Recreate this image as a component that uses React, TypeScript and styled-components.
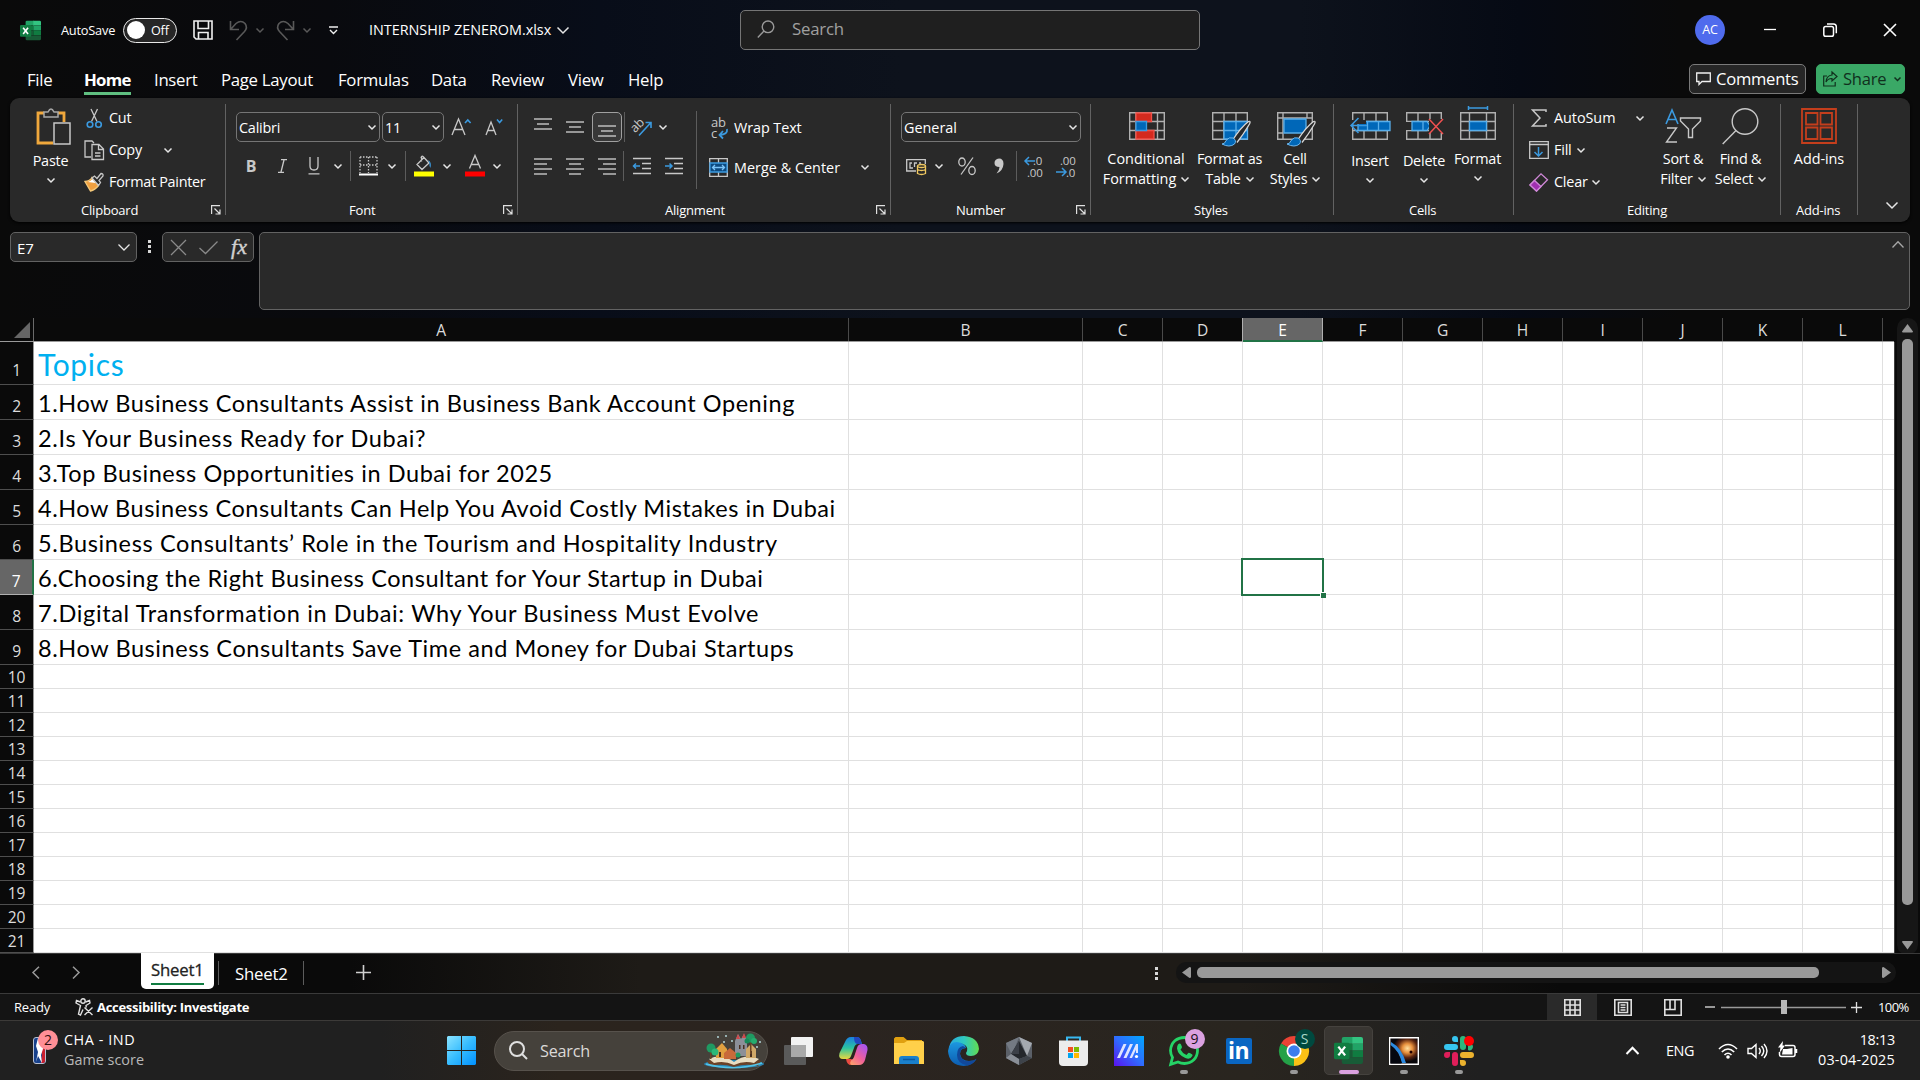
import React from 'react';
import styled, { createGlobalStyle, css } from 'styled-components';

const GlobalStyle = createGlobalStyle`
  *, *::before, *::after { box-sizing: border-box; }
  body { margin: 0; background: #0a0a0a; overflow: hidden; }
  svg { display: block; flex: none; overflow: visible; }
`;

const ui = '"Open Sans", "Noto Sans", sans-serif';
const grey = '#c8c8c8';
const blue = '#3b9ae0';

/* ---------- shared parts ---------- */

const Window = styled.div`
  width: 1920px;
  height: 1080px;
  display: flex;
  flex-direction: column;
  overflow: hidden;
  font-family: ${ui};
  font-size: 14.4px;
  letter-spacing: -0.014em;
  line-height: 20px;
  color: #fff;
  white-space: nowrap;
  background: linear-gradient(90deg, #0a0a0a 0, #090a0e 330px, #080d19 600px, #0d121c 900px, #0d121c 1300px, #060a14 1520px, #0a0a0a 1680px);
`;

const Text = styled.span<{ $size?: number; $color?: string; $w?: number; $track?: number; $bold?: boolean; $dy?: number }>`
  flex: none;
  font-size: ${p => p.$size ?? 14.4}px;
  color: ${p => p.$color ?? '#fff'};
  font-weight: ${p => (p.$bold ? 700 : 400)};
  ${p => p.$w && css`width: ${p.$w}px;`}
  ${p => p.$track !== undefined && css`letter-spacing: ${p.$track}px;`}
  ${p => p.$dy && css`margin-top: ${p.$dy}px;`}
`;

const Slot = styled.span<{ $w: number; $dy?: number }>`
  flex: none;
  width: ${p => p.$w}px;
  display: flex;
  justify-content: center;
  align-items: center;
  ${p => p.$dy && css`margin-top: ${p.$dy}px;`}
`;

const Gap = styled.span<{ $w: number }>`
  flex: none;
  width: ${p => p.$w}px;
`;

type SvgProps = { w: number; h: number; children: React.ReactNode; stroke?: string; sw?: number };
const Svg = ({ w, h, children, stroke = grey, sw = 1.3 }: SvgProps) => (
  <svg width={w} height={h} viewBox={`0 0 ${w} ${h}`} fill="none" stroke={stroke} strokeWidth={sw}>
    {children}
  </svg>
);

const Chevron = ({ w = 8, color = '#e6e6e6', sw = 1.5, up = false }: { w?: number; color?: string; sw?: number; up?: boolean }) => (
  <Svg w={w} h={w / 2 + 1} stroke={color} sw={sw}>
    <path d={up ? `M.5 ${w / 2 + 0.5}L${w / 2} .7L${w - 0.5} ${w / 2 + 0.5}` : `M.5 .5L${w / 2} ${w / 2}L${w - 0.5} .5`} />
  </Svg>
);

/* ---------- title bar ---------- */

const TitleBar = styled.header`
  height: 60px;
  display: flex;
  align-items: center;
  padding-left: 20px;
`;

const Toggle = styled.div`
  width: 54px;
  height: 25px;
  border: 1.5px solid #e8e8e8;
  border-radius: 13px;
  background: #262626;
  display: flex;
  align-items: center;
  padding-left: 3px;
  gap: 6px;
`;

const Knob = styled.i`
  width: 18px;
  height: 18px;
  border-radius: 50%;
  background: #fff;
`;

const SearchBox = styled.div`
  width: 460px;
  height: 40px;
  border: 1px solid #757575;
  border-radius: 5px;
  background: #1f1f1f;
  display: flex;
  align-items: center;
  padding: 0 0 2px 16px;
  gap: 17px;
`;

const Avatar = styled.div`
  width: 30px;
  height: 30px;
  border-radius: 50%;
  background: #4f6bed;
  display: flex;
  align-items: center;
  justify-content: center;
`;

const ExcelLogo = ({ size }: { size: number }) => (
  <svg width={size} height={size} viewBox="0 0 30 30">
    <path d="M10 1h10v7H8V3q0-2 2-2z" fill="#21a366" />
    <path d="M19 1h9q2 0 2 2v5H19z" fill="#33c481" />
    <path d="M8 8h11v7H8z" fill="#107c41" />
    <path d="M19 8h11v7H19z" fill="#21a366" />
    <path d="M8 15h11v7H8z" fill="#185c37" />
    <path d="M19 15h11v7H19z" fill="#107c41" />
    <path d="M8 22h22v5q0 2-2 2H10q-2 0-2-2z" fill="#185c37" />
    <rect x="0" y="7" width="16" height="17" rx="1.5" fill="#107c41" />
    <path d="M4.500 11l7 9M11.500 11l-7 9" stroke="#fff" strokeWidth="2.3" />
  </svg>
);

const Undo = ({ flip = false }: { flip?: boolean }) => (
  <svg width="19" height="21" viewBox="0 0 19 21" fill="none" stroke="#595959" strokeWidth="1.6" transform={flip ? 'scale(-1 1)' : undefined}>
    <path d="M1.500 1v8.500h8.500M2 9L7 3.500Q12 -.5 16 3.500Q19 7.500 15.500 11.500L7.500 20" />
  </svg>
);

const Title = () => (
  <TitleBar>
    <ExcelLogo size={21} />
    <Gap $w={20} />
    <Text $size={12.8} $w={62} $track={-0.22}>AutoSave</Text>
    <Toggle><Knob /><Text $size={12.6} $dy={1}>Off</Text></Toggle>
    <Gap $w={16} />
    <Svg w={20} h={20} stroke="#f0f0f0" sw={1.6}>
      <path d="M1 1h18v18H3l-2-2zM5 1v7.500h10.500V1M5.500 19v-6.500h9.500V19" />
    </Svg>
    <Gap $w={16} />
    <Undo />
    <Slot $w={24}><Chevron color="#595959" /></Slot>
    <Gap $w={4} />
    <Undo flip />
    <Slot $w={24}><Chevron color="#595959" /></Slot>
    <Gap $w={10} />
    <Svg w={9} h={9} stroke="#f0f0f0" sw={1.4}><path d="M0 1h9M1 4l3.500 3.500L8 4" /></Svg>
    <Gap $w={31} />
    <Text $w={188} $track={-0.03}>INTERNSHIP ZENEROM.xlsx</Text>
    <Chevron w={12} />
    <Gap $w={171} />
    <SearchBox>
      <Svg w={18} h={18} stroke="#9a9a9a" sw={1.4}><circle cx="11" cy="6.800" r="5.800" /><path d="M7 11L.8 17.500" /></Svg>
      <Text $size={16.8} $color="#a0a0a0">Search</Text>
    </SearchBox>
    <Gap $w={495} />
    <Avatar><Text $size={12.5}>AC</Text></Avatar>
    <Gap $w={39} />
    <Svg w={12} h={2} stroke="#fff"><path d="M0 .5h12" /></Svg>
    <Gap $w={47} />
    <Svg w={14} h={14} stroke="#fff" sw={1.5}>
      <rect x=".8" y="3.500" width="9.700" height="9.700" rx="1.800" />
      <path d="M4 1h6.500q2.800 0 2.800 2.800v6.500" />
    </Svg>
    <Gap $w={46} />
    <Svg w={14} h={14} stroke="#fff" sw={1.6}><path d="M1 1l12 12M13 1L1 13" /></Svg>
  </TitleBar>
);

/* ---------- ribbon tabs ---------- */

const TabStrip = styled.nav`
  height: 38px;
  display: flex;
  padding-left: 27px;
`;

const Tab = styled.div<{ $w: number; $active?: boolean }>`
  width: ${p => p.$w}px;
  padding-top: 9px;
  font-size: 16.8px;
  line-height: 22px;
  font-weight: ${p => (p.$active ? 700 : 400)};
  letter-spacing: ${p => (p.$active ? '-0.045em' : '-0.018em')};
  span {
    display: inline-block;
    height: 26px;
    ${p => p.$active && css`border-bottom: 3px solid #5fbf80;`}
  }
`;

const PillButton = styled.button<{ $w: number; $primary?: boolean }>`
  width: ${p => p.$w}px;
  height: 30px;
  margin-top: 4px;
  padding: 0 0 0 6px;
  border-radius: 5px;
  border: 1px solid ${p => (p.$primary ? '#3aa866' : '#7a7a7a')};
  background: ${p => (p.$primary ? '#3aa866' : '#262626')};
  font: inherit;
  letter-spacing: -0.018em;
  display: flex;
  align-items: center;
  gap: 5px;
`;

const tabs: [string, number][] = [
  ['File', 57], ['Home', 70], ['Insert', 67], ['Page Layout', 117], ['Formulas', 93],
  ['Data', 60], ['Review', 77], ['View', 60], ['Help', 1061],
];

const Tabs = () => (
  <TabStrip>
    {tabs.map(([name, w]) => (
      <Tab key={name} $w={w} $active={name === 'Home'}><span>{name}</span></Tab>
    ))}
    <PillButton $w={117}>
      <Svg w={15} h={14} stroke="#f0f0f0"><path d="M.7 1h13.600v8.500H6L3 12.500V9.500H.7z" /></Svg>
      <Text $size={16.6}>Comments</Text>
    </PillButton>
    <Gap $w={10} />
    <PillButton $w={89} $primary>
      <Svg w={15} h={16} stroke="#10301d" sw={1.2}>
        <path d="M4 5H.7v10h11.500V11M9 1l5 4.500L9 10V7.500Q5 7.300 3 11Q3.500 4.500 9 4z" />
      </Svg>
      <Text $size={16.6} $color="#10301d">Share</Text>
      <Slot $w={13}><Chevron w={7} color="#10301d" /></Slot>
    </PillButton>
  </TabStrip>
);

/* ---------- ribbon ---------- */

const RibbonBar = styled.section`
  margin: 0 10px;
  height: 124px;
  flex: none;
  border-radius: 9px;
  background: #292929;
  display: flex;
  box-shadow: 0 1px 3px #000;
`;

const Group = styled.div<{ $w: number }>`
  width: ${p => p.$w}px;
  flex: none;
  display: flex;
  flex-direction: column;
`;

const GroupBody = styled.div`
  height: 101px;
  display: flex;
`;

const GroupFoot = styled.div<{ $pad: number }>`
  height: 21px;
  padding-left: ${p => p.$pad}px;
  padding-right: 4px;
  display: flex;
  justify-content: space-between;
  align-items: center;
  font-size: 13px;
`;

const GroupRule = styled.i`
  flex: none;
  width: 1px;
  height: 111px;
  margin-top: 6px;
  background: #626262;
`;

const Rule = styled.i<{ $h?: number; $mx?: string }>`
  flex: none;
  width: 1px;
  height: ${p => p.$h ?? 30}px;
  margin: ${p => p.$mx ?? '0'};
  background: #5c5c5c;
`;

const Stack = styled.div<{ $w?: number; $top?: number; $gap?: number; $left?: number }>`
  ${p => p.$w && css`width: ${p.$w}px;`}
  flex: none;
  padding-top: ${p => p.$top ?? 0}px;
  padding-left: ${p => p.$left ?? 0}px;
  display: flex;
  flex-direction: column;
  gap: ${p => p.$gap ?? 0}px;
`;

const Row = styled.div<{ $h: number }>`
  height: ${p => p.$h}px;
  display: flex;
  align-items: center;
`;

const Combo = styled.div<{ $w: number }>`
  width: ${p => p.$w}px;
  height: 30px;
  flex: none;
  border: 1px solid #757575;
  border-radius: 5px;
  padding: 1px 3px 0 2px;
  display: flex;
  align-items: center;
  justify-content: space-between;
`;

const PressedButton = styled.span`
  width: 30px;
  height: 30px;
  flex: none;
  border: 1px solid #a0a0a0;
  border-radius: 5px;
  background: #383838;
  display: flex;
  align-items: center;
  justify-content: center;
`;

const BigButton = styled.div<{ $w: number; $left?: number }>`
  width: ${p => p.$w}px;
  flex: none;
  display: flex;
  flex-direction: column;
  align-items: center;
  padding: 8px 0 0 ${p => p.$left ?? 0}px;
`;

const IconArea = styled.span<{ $left?: number }>`
  height: 43px;
  padding: 0 0 3px ${p => p.$left ?? 0}px;
  display: flex;
  align-items: center;
`;

const LabelLine = styled.span<{ $h?: number }>`
  height: ${p => p.$h ?? 20}px;
  display: flex;
  align-items: center;
  gap: 5px;
`;

const Launcher = () => (
  <Svg w={10} h={10} stroke="#e0e0e0" sw={1.2}><path d="M.6 9V.6H9M3.500 3.500l5 5M9 4.500V9H4.500" /></Svg>
);

const Lines = ({ rows }: { rows: [number, number][] }) => (
  <Svg w={18} h={2 + 5 * (rows.length - 1)} sw={1.4}>
    {rows.map(([a, b], i) => <path key={i} d={`M${a} ${1 + i * 5}H${b}`} />)}
  </Svg>
);

const Brush = () => (
  <>
    <path d="M11 21Q20 7 27.500 1.500Q30 .5 28.500 4Q22 15 16 22.500" fill="#292929" stroke="#d8d8d8" strokeWidth="1.3" />
    <path d="M1 24Q4 24 5 20.500Q8 16.500 12 18Q16 20.500 13.500 24Q8.500 28 1 24z" fill="#0067b8" stroke="#6cb8f0" strokeWidth="1" />
  </>
);

const Clipboard = () => (
  <Group $w={215}>
    <GroupBody>
      <BigButton $w={68} $left={13}>
        <IconArea $left={6}>
          <Svg w={36} h={38} sw={1.5}>
            <path d="M8 6H2v30h15M22 6h6v9" stroke="#f0a83c" strokeWidth="2.800" />
            <path d="M8 10V5h4q3-6 6 0h4v5z" fill="#292929" stroke="#a8a8a8" />
            <path d="M18 16h16v21H18z" fill="#292929" />
          </Svg>
        </IconArea>
        <LabelLine $h={24}><Text>Paste</Text></LabelLine>
        <LabelLine $h={14}><Chevron /></LabelLine>
      </BigButton>
      <Stack $top={4} $left={6}>
        <Row $h={32}>
          <Gap $w={2} />
          <Svg w={17} h={21}>
            <path d="M5 1l6 12.500M11.500 1l-6 12.500" />
            <circle cx="4" cy="16.500" r="2.800" stroke={blue} strokeWidth="1.600" />
            <circle cx="12.500" cy="16.500" r="2.800" stroke={blue} strokeWidth="1.600" />
          </Svg>
          <Gap $w={6} />
          <Text>Cut</Text>
        </Row>
        <Row $h={32}>
          <Svg w={20} h={20}>
            <path d="M7 17H1V1h7l2 2M8 4.500h7l4.500 4.500v10.500H8zM14.500 4.500v5h5M11 13h5.500M11 16h5.500" />
          </Svg>
          <Gap $w={5} />
          <Text $w={52}>Copy</Text>
          <Slot $w={14}><Chevron /></Slot>
        </Row>
        <Row $h={32}>
          <Svg w={20} h={20}>
            <path d="M1 9.500Q6 9 8 5.500l6.500 8Q11 18 6.500 19z" fill="#f0a040" stroke="#f5c878" />
            <path d="M4 10Q7 9 8.500 7l3 4z" fill="#fff" stroke="none" />
            <path d="M8 6l2.500-2 2.500 2.500L17 1.500q2.500 0 2 2.500l-4 4.500 1.500 2-2 3z" fill="#292929" />
          </Svg>
          <Gap $w={5} />
          <Text $track={-0.28}>Format Painter</Text>
        </Row>
      </Stack>
    </GroupBody>
    <GroupFoot $pad={71}>Clipboard<Launcher /></GroupFoot>
  </Group>
);

const FontGroup = () => (
  <Group $w={291}>
    <GroupBody>
      <Stack $top={14} $left={10} $gap={8}>
        <Row $h={30}>
          <Combo $w={144}><Text>Calibri</Text><Chevron /></Combo>
          <Gap $w={2} />
          <Combo $w={62}><Text>11</Text><Chevron /></Combo>
          <Gap $w={7} />
          <Svg w={20} h={18}>
            <path d="M1 17L7.500 1L14 17M3.500 11.500h8" />
            <path d="M14 5l2.800-3L19.600 5" stroke={blue} strokeWidth="1.600" />
          </Svg>
          <Gap $w={14} />
          <Svg w={18} h={18}>
            <path d="M1 17L6 4L11 17M3 12.500h6" />
            <path d="M12 1.500l2.600 3L17.200 1.500" stroke={blue} strokeWidth="1.600" />
          </Svg>
        </Row>
        <Row $h={32}>
          <Slot $w={30}><Text $size={16} $bold $color={grey}>B</Text></Slot>
          <Slot $w={32}>
            <Svg w={9} h={14}><path d="M3 .7h6M0 13.300h6M6 1L3 13" /></Svg>
          </Slot>
          <Slot $w={31}>
            <Svg w={12} h={18}><path d="M2 0v9q0 4 4 4t4-4V0M.5 16.800h11" /></Svg>
          </Slot>
          <Slot $w={18}><Chevron /></Slot>
          <Rule $mx="0 2px 0 3px" />
          <Slot $w={30}>
            <Svg w={19} h={20}>
              <path d="M1 1h17M1 9h17M1 1v16M9.500 1v16M18 1v16" strokeDasharray="1.500 1.500" />
              <path d="M0 18.500h19" strokeWidth="2" stroke="#fff" />
            </Svg>
          </Slot>
          <Slot $w={18}><Chevron /></Slot>
          <Rule $mx="0 1px 0 4px" />
          <Slot $w={33}>
            <Svg w={20} h={20}>
              <path d="M7.500 .5v5M10 1.500L3 8.500l5 5 7-6.500-5.500-6q-2-2-2.500 1" />
              <path d="M14 4q4 2 2.500 8-1.500-2-1-5z" fill={blue} stroke="none" />
              <path d="M0 15.500h20v5H0z" fill="#ff0" stroke="none" />
            </Svg>
          </Slot>
          <Slot $w={14}><Chevron /></Slot>
          <Slot $w={41}>
            <Svg w={20} h={20}>
              <path d="M4.500 12.500L10 -.5L15.500 12.500M6.500 8.500h7" />
              <path d="M0 15.500h20v5H0z" fill="#f00" stroke="none" />
            </Svg>
          </Slot>
          <Slot $w={4}><Chevron /></Slot>
        </Row>
      </Stack>
    </GroupBody>
    <GroupFoot $pad={123}>Font<Launcher /></GroupFoot>
  </Group>
);

const Indent = ({ right = false }: { right?: boolean }) => (
  <Svg w={18} h={18} sw={1.4}>
    <path d="M0 1.500h18M9 6.500h9M9 11.500h9M0 16.500h18" />
    <path d={right ? 'M0 9h7M4.500 6.500L7 9l-2.500 2.500' : 'M7 9H.5M3 6.500L.5 9 3 11.500'} stroke={blue} strokeWidth="1.500" />
  </Svg>
);

const Alignment = () => (
  <Group $w={372}>
    <GroupBody>
      <Stack $top={14} $left={9} $gap={8}>
        <Row $h={30}>
          <Slot $w={32} $dy={-7}><Lines rows={[[0, 18], [3, 15], [0, 18]]} /></Slot>
          <Slot $w={32}><Lines rows={[[0, 18], [3, 15], [0, 18]]} /></Slot>
          <Gap $w={1} />
          <PressedButton><Slot $w={20} $dy={8}><Lines rows={[[0, 18], [3, 15], [0, 18]]} /></Slot></PressedButton>
          <Rule $mx="0 6px 0 2px" />
          <Svg w={21} h={20}>
            <text x="0" y="13" fontSize="12.500" fill={grey} stroke="none" transform="rotate(-45 6 10)">ab</text>
            <path d="M8 18.500L19.500 6M14.500 5.500h5.500v5.500" stroke={blue} strokeWidth="1.600" />
          </Svg>
          <Slot $w={22}><Chevron /></Slot>
        </Row>
        <Row $h={32}>
          <Slot $w={32}><Lines rows={[[0, 18], [0, 13], [0, 18], [0, 13]]} /></Slot>
          <Slot $w={32}><Lines rows={[[0, 18], [3, 15], [0, 18], [3, 15]]} /></Slot>
          <Slot $w={32}><Lines rows={[[0, 18], [5, 18], [0, 18], [5, 18]]} /></Slot>
          <Rule />
          <Gap $w={1} />
          <Slot $w={34}><Indent /></Slot>
          <Slot $w={30}><Indent right /></Slot>
        </Row>
      </Stack>
      <Gap $w={7} />
      <Rule $h={78} $mx="13px 12px 0 0" />
      <Stack $top={14} $gap={7}>
        <Row $h={32}>
          <Svg w={20} h={22}>
            <text x="2" y="9.500" fontSize="13" fill={grey} stroke="none">ab</text>
            <text x="2" y="21" fontSize="13" fill={grey} stroke="none">c</text>
            <path d="M18 12q1 5.500-7.500 6M14 14l-3.500 4 3.500 3.500" stroke={blue} strokeWidth="1.800" />
          </Svg>
          <Gap $w={5} />
          <Text $track={-0.08}>Wrap Text</Text>
        </Row>
        <Row $h={32}>
          <Svg w={19} h={19}>
            <path d="M.7.7h17.600v17.600H.7zM9.500 0v19" />
            <path d="M1 5h17v9H1z" fill="#0c4a80" stroke={blue} />
            <path d="M4 9.500h11M6 7L3.500 9.500 6 12M13 7l2.500 2.500L13 12" stroke="#7cc4f8" />
          </Svg>
          <Gap $w={6} />
          <Text $w={124} $track={0.02} $dy={1}>Merge &amp; Center</Text>
          <Slot $w={14}><Chevron /></Slot>
        </Row>
      </Stack>
    </GroupBody>
    <GroupFoot $pad={147}>Alignment<Launcher /></GroupFoot>
  </Group>
);

const DecimalIcon = ({ less = false }: { less?: boolean }) => (
  <Svg w={20} h={22}>
    <text x={less ? 3 : 9} y="9.500" fontSize="11.500" fill={grey} stroke="none">{less ? '.00' : '.0'}</text>
    <text x={less ? 9 : 3} y="21.500" fontSize="11.500" fill={grey} stroke="none">{less ? '.0' : '.00'}</text>
    <path d={less ? 'M-1 17h10M5 13l4 4-4 4' : 'M11 6H1M5 2L1 6l4 4'} stroke={blue} strokeWidth="1.500" />
  </Svg>
);

const NumberGroup = () => (
  <Group $w={199}>
    <GroupBody>
      <Stack $top={14} $left={10} $gap={8}>
        <Row $h={30}><Combo $w={180}><Text $track={0}>General</Text><Chevron /></Combo></Row>
        <Row $h={32}>
          <Gap $w={5} />
          <Svg w={21} h={18}>
            <path d="M10 14H.7V2.700h18.600V7M6 6H4v5h3M11 6H8.500v4M15 6h-2" />
            <path d="M11 8.500h9v9h-9z" fill="#292929" stroke="none" />
            <path d="M11.500 9v7.500q4 2 8 0V9M11.500 12.500q4 2 8 0" stroke="#f0c860" />
            <ellipse cx="15.500" cy="9" rx="4" ry="1.500" stroke="#f0c860" />
          </Svg>
          <Slot $w={24}><Chevron /></Slot>
          <Slot $w={32}>
            <Svg w={18} h={18}><path d="M15 .5L3 17.500" /><ellipse cx="4" cy="5" rx="3.200" ry="4" /><ellipse cx="14" cy="13.500" rx="3.200" ry="4" /></Svg>
          </Slot>
          <Slot $w={32}>
            <Svg w={10} h={16}><path d="M5 .5q4.500 0 4.500 5.500Q9 13 2.500 15.500q3-3 3-6.500Q.5 9 .5 5T5 .5z" fill={grey} stroke="none" /></Svg>
          </Slot>
          <Rule $mx="0 7px 0 1px" />
          <DecimalIcon />
          <Gap $w={13} />
          <DecimalIcon less />
        </Row>
      </Stack>
    </GroupBody>
    <GroupFoot $pad={65}>Number<Launcher /></GroupFoot>
  </Group>
);

const Grid = ({ w = 36, h = 28 }: { w?: number; h?: number }) => (
  <path d={`M.7.7h${w - 1.4}v${h - 1.4}H.7zM0 9.500h${w}M0 18.500h${w}M12 0v${h}M24 0v${h}`} stroke="#b0b0b0" strokeWidth="1.400" />
);

const Styles = () => (
  <Group $w={242}>
    <GroupBody>
      <Gap $w={6} />
      <BigButton $w={98}>
        <IconArea $left={2}>
          <Svg w={36} h={28}>
            <path d="M.7.7h34.600v26.600H.7zM0 9.500h36M0 18.500h36M7 0v28M28.500 0v28" stroke="#b0b0b0" strokeWidth="1.400" />
            <path d="M7 1h15.500v8.500H7zM7 18.500h18V27H7z" fill="#d42a1e" stroke="#f05048" />
            <path d="M7 9.500h10.500v9H7z" fill="#0067b8" stroke="#3b9ae0" />
          </Svg>
        </IconArea>
        <LabelLine><Text $track={0.05}>Conditional</Text></LabelLine>
        <LabelLine><Text $track={-0.05}>Formatting</Text><Chevron /></LabelLine>
      </BigButton>
      <BigButton $w={69}>
        <IconArea $left={3}>
          <Svg w={38} h={28}>
            <Grid />
            <path d="M12 9.500h23.500V27H12z" fill="#0067b8" stroke="#58aeea" />
            <path d="M12 18.500h24M24 9.500V27" stroke="#58aeea" />
            <g transform="translate(9 8)"><Brush /></g>
          </Svg>
        </IconArea>
        <LabelLine><Text>Format as</Text></LabelLine>
        <LabelLine><Text>Table</Text><Chevron /></LabelLine>
      </BigButton>
      <BigButton $w={62}>
        <IconArea $left={2}>
          <Svg w={38} h={28}>
            <path d="M.7.7h34.600v26.600H.7zM0 6h36M6 0v28M30 0v6M0 21h6" stroke="#b0b0b0" strokeWidth="1.400" />
            <path d="M7 7h22v14H7z" fill="#0067b8" stroke="#58aeea" />
            <g transform="translate(9 8)"><Brush /></g>
          </Svg>
        </IconArea>
        <LabelLine><Text>Cell</Text></LabelLine>
        <LabelLine><Text>Styles</Text><Chevron /></LabelLine>
      </BigButton>
    </GroupBody>
    <GroupFoot $pad={103}>Styles</GroupFoot>
  </Group>
);

const Cells = () => (
  <Group $w={179}>
    <GroupBody>
      <Gap $w={9} />
      <BigButton $w={54}>
        <IconArea>
          <Svg w={40} h={28}>
            <g transform="translate(2 0)"><Grid /></g>
            <path d="M8 9.500h32v9H8z" fill="#0067b8" stroke="#58aeea" />
            <path d="M17.500 9.500v9M28.500 9.500v9" stroke="#58aeea" />
            <path d="M0 8h16v4H0z" fill="#292929" stroke="none" />
            <path d="M17 13.500H1M8.500 6L1 13.500 8.500 21" stroke={blue} strokeWidth="1.500" />
          </Svg>
        </IconArea>
        <LabelLine $h={24}><Text>Insert</Text></LabelLine>
        <LabelLine $h={14}><Chevron /></LabelLine>
      </BigButton>
      <BigButton $w={54}>
        <IconArea>
          <Svg w={37} h={28}>
            <Grid />
            <path d="M0 10h6v8H0z" fill="#292929" stroke="none" />
            <path d="M6 9.500h15l3 4.500-3 4.500H6zM17 9.500v9" fill="#0067b8" stroke="#58aeea" />
            <path d="M23 7h14v14H23z" fill="#292929" stroke="none" />
            <path d="M23 7l14 15M37 7L23 22" stroke="#f05050" strokeWidth="1.500" />
          </Svg>
        </IconArea>
        <LabelLine $h={24}><Text>Delete</Text></LabelLine>
        <LabelLine $h={14}><Chevron /></LabelLine>
      </BigButton>
      <BigButton $w={53}>
        <IconArea>
          <Svg w={36} h={28}>
            <path d="M.7.7h34.600v26.600H.7zM0 9.500h36M0 18.500h36M9.500 0v28M26.500 0v28" stroke="#b0b0b0" strokeWidth="1.400" />
            <path d="M9.500 9.500h17v9h-17z" fill="#0067b8" stroke="#58aeea" />
            <path d="M8.500 -4h19M8.500 -6v4M27.500 -6v4" stroke={blue} strokeWidth="1.500" />
          </Svg>
        </IconArea>
        <LabelLine $h={20}><Text>Format</Text></LabelLine>
        <LabelLine $h={18}><Chevron /></LabelLine>
      </BigButton>
    </GroupBody>
    <GroupFoot $pad={75}>Cells</GroupFoot>
  </Group>
);

const Editing = () => (
  <Group $w={266}>
    <GroupBody>
      <Stack $top={4} $left={15} $w={139}>
        <Row $h={32}>
          <Slot $w={20}><Svg w={16} h={18} sw={1.5}><path d="M15 3V1H1.500L9 9l-7.500 8H15v-2" /></Svg></Slot>
          <Gap $w={5} />
          <Text $w={79} $track={-0.05}>AutoSum</Text>
          <Slot $w={14}><Chevron /></Slot>
        </Row>
        <Row $h={32}>
          <Svg w={20} h={18}>
            <path d="M.7.7h18.600v16.600H.7zM0 3.500h20" />
            <path d="M9.500 6v9M5.500 11l4 4 4-4" stroke={blue} strokeWidth="1.500" />
          </Svg>
          <Gap $w={5} />
          <Text $w={20}>Fill</Text>
          <Slot $w={14}><Chevron /></Slot>
        </Row>
        <Row $h={32}>
          <Svg w={19} h={19}>
            <path d="M1 12L12 .8l6.500 6L7.500 18z" stroke="#d088d8" />
            <path d="M1 12l4.500-4.500 6.500 6L7.500 18z" fill="#a030b0" stroke="#d088d8" />
          </Svg>
          <Gap $w={6} />
          <Text $w={35}>Clear</Text>
          <Slot $w={14}><Chevron /></Slot>
        </Row>
      </Stack>
      <BigButton $w={60}>
        <IconArea>
          <Svg w={36} h={36} sw={1.4}>
            <path d="M1 16L7 2l6 14M3 11.500h8" stroke={blue} strokeWidth="1.600" />
            <path d="M2 20h9.500L1.500 34H12" />
            <path d="M15.500 10h20v3l-8 8v8.500h-4V21l-8-8z" />
          </Svg>
        </IconArea>
        <LabelLine><Text>Sort &amp;</Text></LabelLine>
        <LabelLine><Text>Filter</Text><Chevron /></LabelLine>
      </BigButton>
      <BigButton $w={55}>
        <IconArea>
          <Svg w={37} h={37} sw={1.4}><circle cx="23" cy="13.500" r="12.800" /><path d="M14 22.500L.7 36" /></Svg>
        </IconArea>
        <LabelLine><Text>Find &amp;</Text></LabelLine>
        <LabelLine><Text>Select</Text><Chevron /></LabelLine>
      </BigButton>
    </GroupBody>
    <GroupFoot $pad={113}>Editing</GroupFoot>
  </Group>
);

const AddIns = () => (
  <Group $w={76}>
    <GroupBody>
      <BigButton $w={76}>
        <IconArea>
          <Svg w={36} h={36} stroke="#c43e1c" sw={1.8}>
            <path d="M1 1h34v34H1zM5 5h11.500v11.500H5zM19.500 5H31v11.500H19.500zM5 19.500h11.500V31H5zM19.500 19.500H31V31H19.500z" />
          </Svg>
        </IconArea>
        <LabelLine><Text $track={-0.05}>Add-ins</Text></LabelLine>
      </BigButton>
    </GroupBody>
    <GroupFoot $pad={15}>Add-ins</GroupFoot>
  </Group>
);

const CollapseArea = styled.div`
  flex: 1;
  display: flex;
  align-items: flex-end;
  justify-content: flex-end;
  padding: 0 12px 13px 0;
`;

const Ribbon = () => (
  <RibbonBar>
    <Clipboard /><GroupRule />
    <FontGroup /><GroupRule />
    <Alignment /><GroupRule />
    <NumberGroup /><GroupRule />
    <Styles /><GroupRule />
    <Cells /><GroupRule />
    <Editing /><GroupRule />
    <AddIns /><GroupRule />
    <CollapseArea><Chevron w={12} /></CollapseArea>
  </RibbonBar>
);

/* ---------- formula bar ---------- */

const FormulaBar = styled.section`
  height: 96px;
  flex: none;
  padding: 10px 10px 0;
  display: flex;
  align-items: flex-start;
`;

const Field = styled.div<{ $w: number; $h?: number }>`
  width: ${p => p.$w}px;
  height: ${p => p.$h ?? 30}px;
  flex: none;
  border: 1px solid #626262;
  border-radius: 5px;
  background: #292929;
  display: flex;
  align-items: center;
  justify-content: space-between;
  padding: 1px 6px 0;
`;

const FormulaActions = styled(Field)`
  padding: 0 6px 0 8px;
`;

const FormulaInput = styled(Field)`
  align-items: flex-start;
  justify-content: flex-end;
  padding: 8px 5px;
`;

const FxLabel = styled.span`
  font: italic 400 22px/24px "Liberation Serif", serif;
  letter-spacing: 0;
  -webkit-text-stroke: 0.4px #d0d0d0;
  color: #d0d0d0;
`;

const Dots = () => (
  <Svg w={3} h={14} stroke="none">
    {[0, 5, 10].map(y => <rect key={y} x="0" y={y} width="3" height="3" fill="#d8d8d8" />)}
  </Svg>
);

const Formula = () => (
  <FormulaBar>
    <Field $w={127}><Text $size={15} $track={0}>E7</Text><Chevron w={12} sw={1.3} /></Field>
    <Row $h={30}><Slot $w={25}><Dots /></Slot></Row>
    <FormulaActions $w={92}>
      <Svg w={15} h={15} stroke="#8a8a8a"><path d="M0 0l15 15M15 0L0 15" /></Svg>
      <Svg w={19} h={13} stroke="#8a8a8a"><path d="M.5 7l6 5.500L18.500.5" /></Svg>
      <FxLabel>fx</FxLabel>
    </FormulaActions>
    <Gap $w={5} />
    <FormulaInput $w={1651} $h={78}><Chevron w={12} up color="#a8a8a8" sw={1.3} /></FormulaInput>
  </FormulaBar>
);

/* ---------- worksheet ---------- */

const Sheet = styled.main`
  height: 635px;
  flex: none;
  display: flex;
`;

const Table = styled.div`
  width: 1895px;
  overflow: hidden;
`;

const HeaderRow = styled.div`
  height: 24px;
  width: 1894px;
  display: flex;
  background: #0a0a0a;
  border-bottom: 1px solid #9a9a9a;
`;

const Corner = styled.div`
  width: 34px;
  flex: none;
  border-right: 1px solid #6a6a6a;
  display: flex;
  justify-content: flex-end;
  align-items: flex-end;
  padding: 0 3px 3px 0;
`;

const ColumnHead = styled.div<{ $w: number; $active?: boolean }>`
  width: ${p => p.$w}px;
  flex: none;
  border-right: 1px solid ${p => (p.$active ? '#b0b0b0' : '#4a4a4a')};
  &:last-child { border-right: none; }
  display: flex;
  justify-content: center;
  line-height: 24px;
  font-size: 15.600px;
  color: #dcdcdc;
  ${p => p.$active && css`
    background: #666;
    color: #fff;
    height: 24px;
    border-bottom: 2px solid #217346;
    box-shadow: -1px 0 #b0b0b0;
  `}
`;

const SheetRow = styled.div<{ $h: number }>`
  height: ${p => p.$h}px;
  width: 1895px;
  display: flex;
  background: #fff;
  border-right: 1px solid #404040;
`;

const RowHead = styled.div<{ $active?: boolean; $dy: number }>`
  width: 34px;
  flex: none;
  background: ${p => (p.$active ? '#666' : '#0a0a0a')};
  border-right: ${p => (p.$active ? '2px solid #217346' : '1px solid #9a9a9a')};
  border-bottom: 1px solid ${p => (p.$active ? '#b0b0b0' : '#4e4e4e')};
  display: flex;
  align-items: flex-end;
  justify-content: center;
  font-size: 15.600px;
  line-height: 22px;
  padding-bottom: ${p => p.$dy}px;
  color: ${p => (p.$active ? '#fff' : '#dcdcdc')};
`;

const Cell = styled.div<{ $w: number; $title?: boolean; $track?: number }>`
  width: ${p => p.$w}px;
  flex: none;
  position: relative;
  border-right: 1px solid #e0e0e0;
  border-bottom: 1px solid #e0e0e0;
  &:last-child { border-right: none; }
  padding-left: 4px;
  font-family: Lato, "Open Sans", sans-serif;
  font-size: ${p => (p.$title ? 30 : 23.5)}px;
  line-height: ${p => (p.$title ? 44 : 37)}px;
  letter-spacing: ${p => p.$track ?? 0}px;
  color: ${p => (p.$title ? '#00b0f0' : '#000')};
`;

const Selection = styled.div`
  position: absolute;
  z-index: 1;
  inset: -2px;
  border: 2px solid #217346;
  &::after {
    content: '';
    position: absolute;
    right: -4px;
    bottom: -4px;
    width: 6px;
    height: 6px;
    background: #217346;
    border: 1px solid #fff;
    border-width: 1px 0 0 1px;
  }
`;

const columns: [string, number][] = [
  ['A', 815], ['B', 234], ['C', 80], ['D', 80], ['E', 80], ['F', 80], ['G', 80],
  ['H', 80], ['I', 80], ['J', 80], ['K', 80], ['L', 80], ['', 11],
];

const topics: [string, number][] = [
  ['Topics', 0.65],
  ['1.How Business Consultants Assist in Business Bank Account Opening', 0.545],
  ['2.Is Your Business Ready for Dubai?', 0.67],
  ['3.Top Business Opportunities in Dubai for 2025', 0.575],
  ['4.How Business Consultants Can Help You Avoid Costly Mistakes in Dubai', 0.525],
  ['5.Business Consultants’ Role in the Tourism and Hospitality Industry', 0.635],
  ['6.Choosing the Right Business Consultant for Your Startup in Dubai', 0.545],
  ['7.Digital Transformation in Dubai: Why Your Business Must Evolve', 0.645],
  ['8.How Business Consultants Save Time and Money for Dubai Startups', 0.58],
];

const rowHeight = (n: number) => (n === 1 ? 43 : n <= 9 ? 35 : 24);

const VScroll = styled.div`
  width: 21px;
  height: 637px;
  margin-left: 2px;
  border-radius: 10px;
  background: #161616;
  display: flex;
  flex-direction: column;
  align-items: center;
  padding-top: 6px;
`;

const Thumb = styled.i<{ $w: number; $h: number; $m?: string }>`
  width: ${p => p.$w}px;
  height: ${p => p.$h}px;
  margin: ${p => p.$m ?? '0'};
  border-radius: 5px;
  background: #999;
`;

const Worksheet = () => (
  <Sheet>
    <Table>
      <HeaderRow>
        <Corner><Svg w={16} h={16} stroke="none"><path d="M16 0v16H0z" fill="#666" /></Svg></Corner>
        {columns.map(([c, w]) => <ColumnHead key={c} $w={w} $active={c === 'E'}>{c}</ColumnHead>)}
      </HeaderRow>
      {Array.from({ length: 21 }, (_, i) => i + 1).map(n => (
        <SheetRow key={n} $h={rowHeight(n)}>
          <RowHead $active={n === 7} $dy={n === 1 ? 3 : n <= 9 ? 2 : 0}>{n}</RowHead>
          {columns.map(([c, w]) => (
            <Cell key={c} $w={w} $title={n === 1} $track={topics[n - 1]?.[1]}>
              {c === 'A' && topics[n - 1]?.[0]}
              {c === 'E' && n === 7 && <Selection />}
            </Cell>
          ))}
        </SheetRow>
      ))}
    </Table>
    <VScroll>
      <Svg w={11} h={8} stroke="none"><path d="M5.500 0L11 7.500Q11 8.500 10 8.500H1Q0 8.500 0 7.500z" fill="#999" /></Svg>
      <Thumb $w={11} $h={566} $m="7px 0 36px" />
      <Svg w={11} h={8} stroke="none"><path d="M5.500 8.500L11 1Q11 0 10 0H1Q0 0 0 1z" fill="#999" /></Svg>
    </VScroll>
  </Sheet>
);

/* ---------- sheet tabs ---------- */

const SheetBar = styled.section`
  height: 41px;
  flex: none;
  border-top: 1px solid #3a3a3a;
  border-bottom: 1px solid #3a3a3a;
  padding-bottom: 2px;
  display: flex;
  align-items: center;
  background: linear-gradient(90deg, #0a0a0a 350px, #1e1b17 640px, #1e1b17 1240px, #0a0a0a 1560px);
`;

const ActiveSheet = styled.div`
  width: 73px;
  height: 36px;
  align-self: flex-start;
  margin-top: -1px;
  padding: 6px 10px 0;
  border-radius: 0 0 5px 5px;
  background: #fff;
  color: #222;
  font-size: 16.800px;
  line-height: 22px;
  letter-spacing: -0.2px;
  -webkit-text-stroke: 0.3px #222;
  span { display: block; height: 26px; border-bottom: 2px solid #107c41; }
`;

const HScroll = styled.div`
  width: 720px;
  height: 21px;
  border-radius: 10px;
  background: #141414;
  display: flex;
  align-items: center;
  padding-left: 6px;
`;

const SheetTabs = () => (
  <SheetBar>
    <Gap $w={32} />
    <Svg w={8} h={13} stroke="#9a9a9a" sw={1.5}><path d="M7 .7L1 6.500l6 6" /></Svg>
    <Gap $w={32} />
    <Svg w={8} h={13} stroke="#9a9a9a" sw={1.5}><path d="M1 .7l6 5.800-6 6" /></Svg>
    <Gap $w={61} />
    <ActiveSheet><span>Sheet1</span></ActiveSheet>
    <Rule $h={24} $mx="0 16px 0 4px" />
    <Text $size={16.8} $w={68} $dy={3} $track={-0.2}>Sheet2</Text>
    <Rule $h={24} />
    <Gap $w={52} />
    <Svg w={15} h={15} stroke="#d0d0d0" sw={1.6}><path d="M0 7.500h15M7.500 0v15" /></Svg>
    <Gap $w={784} />
    <Slot $w={3} $dy={2}><Dots /></Slot>
    <Gap $w={18} />
    <HScroll>
      <Svg w={9} h={11} stroke="none"><path d="M0 5.500L7.500 0Q9 0 9 1v9q0 1-1.500 1z" fill="#999" /></Svg>
      <Thumb $w={622} $h={11} $m="0 63px 0 6px" />
      <Svg w={9} h={11} stroke="none"><path d="M9 5.500L1.500 0Q0 0 0 1v9q0 1 1.500 1z" fill="#999" /></Svg>
    </HScroll>
  </SheetBar>
);

/* ---------- status bar ---------- */

const StatusBar = styled.section`
  height: 27px;
  flex: none;
  border-bottom: 1px solid #3c3a38;
  background: #141414;
  display: flex;
  align-items: center;
  padding-left: 14px;
  font-size: 13px;
`;

const ViewButton = styled.span<{ $active?: boolean }>`
  width: 50px;
  height: 26px;
  flex: none;
  display: flex;
  align-items: center;
  justify-content: center;
  background: ${p => (p.$active ? '#2a2a2a' : 'transparent')};
`;

const Status = () => (
  <StatusBar>
    <Text $size={13} $w={61}>Ready</Text>
    <Svg w={18} h={18} stroke="#e0e0e0" sw={1.4}>
      <circle cx="8" cy="3" r="2.200" />
      <path d="M5.500 4L1.500 2.500 1 5l4.500 2.500L3.500 16l2 1L8 11.500M10.500 4l4-1.500.5 2.500-4 2.500.3 2M9.500 9.500l8 7.500M17.500 9.500l-8 7.500" />
    </Svg>
    <Gap $w={4} />
    <Text $size={13} $bold $w={1450} $track={-0.29}>Accessibility: Investigate</Text>
    <ViewButton $active>
      <Svg w={17} h={17} stroke="#e0e0e0" sw={1.6}><path d="M.8.8h15.400v15.400H.8zM.8 6h15.400M.8 11h15.400M6 .8v15.400M11 .8v15.400" /></Svg>
    </ViewButton>
    <Gap $w={1} />
    <ViewButton>
      <Svg w={18} h={17} stroke="#e0e0e0" sw={1.6}><path d="M.8.8h16.400v15.400H.8zM4.500 3.500h9v10h-9zM6.500 6h5M6.500 8.500h5M6.500 11h5" /></Svg>
    </ViewButton>
    <ViewButton>
      <Svg w={18} h={17} stroke="#e0e0e0" sw={1.6}><path d="M.8.8h16.400v15.400H.8zM.8 10.500h10.200V.8M6 .8v9.500" /></Svg>
    </ViewButton>
    <Gap $w={7} />
    <Svg w={10} h={2} stroke="#e0e0e0"><path d="M0 1h10" /></Svg>
    <Gap $w={6} />
    <Svg w={125} h={14} stroke="#999">
      <path d="M0 7.500h125" /><rect x="60" y="0" width="6" height="14" fill="#b8b8b8" stroke="none" />
    </Svg>
    <Gap $w={5} />
    <Svg w={11} h={11} stroke="#e0e0e0"><path d="M0 5.500h11M5.500 0v11" /></Svg>
    <Gap $w={16} />
    <Text $size={13} $track={-0.6}>100%</Text>
  </StatusBar>
);

/* ---------- taskbar ---------- */

const TaskBar = styled.footer`
  height: 59px;
  flex: none;
  display: flex;
  align-items: center;
  background: linear-gradient(90deg, #202020 380px, #2b241d 560px, #2b2420 800px, #29251f 1250px, #202020 1480px);
`;

const Widget = styled.div`
  width: 434px;
  padding-left: 33px;
  display: flex;
  align-items: center;
`;

const Anchor = styled.span`
  position: relative;
  display: flex;
`;

const Badge = styled.b<{ $bg: string; $color: string; $x: number; $y: number }>`
  position: absolute;
  left: ${p => p.$x}px;
  top: ${p => p.$y}px;
  width: 20px;
  height: 20px;
  border-radius: 50%;
  background: ${p => p.$bg};
  color: ${p => p.$color};
  font-size: 14px;
  font-weight: 400;
  line-height: 20px;
  text-align: center;
`;

const TwoLines = styled.div<{ $right?: boolean }>`
  display: flex;
  flex-direction: column;
  padding-bottom: 2px;
  text-align: ${p => (p.$right ? 'right' : 'left')};
`;

const TaskSearch = styled.div`
  width: 274px;
  height: 40px;
  margin: 0 3px 0 5px;
  border-radius: 20px;
  border: 1px solid #57524c;
  background: #45413b;
  display: flex;
  align-items: center;
  padding: 0 4px 0 14px;
`;

const TaskButton = styled.span<{ $active?: boolean }>`
  width: 49px;
  height: 49px;
  margin: 0 3px;
  flex: none;
  border-radius: 5px;
  display: flex;
  align-items: center;
  justify-content: center;
  position: relative;
  ${p => p.$active && css`background: #393632; border: 1px solid #45423e;`}
`;

const Running = styled.i<{ $active?: boolean }>`
  position: absolute;
  bottom: ${p => (p.$active ? 0 : 1)}px;
  width: ${p => (p.$active ? 20 : 8)}px;
  height: 4px;
  border-radius: 2px;
  background: ${p => (p.$active ? '#dba1e0' : '#999')};
`;

const Book = () => (
  <Svg w={60} h={36} stroke="none">
    <ellipse cx="30" cy="31" rx="30" ry="4" fill="#2b86b4" />
    <path d="M3 28Q16 23 30 30Q44 23 57 28L54 33Q42 30 30 34Q18 30 6 33z" fill="#6a4228" />
    <path d="M5 26Q18 20 30 29Q42 20 55 26L50 30Q40 27 30 32Q20 27 10 30z" fill="#e9dcc0" />
    <path d="M31 8l3-7 3 5 3-5 3 7v15H31z" fill="#8c8f98" />
    <path d="M32 6l2-5 2 5zM38 5l2-5 2 5z" fill="#d0484a" />
    <path d="M12 16l6-6 5 6v9H12z" fill="#e0a040" />
    <path d="M42 16l5-5 5 5v9H42z" fill="#d0a868" />
    <path d="M20 20l6-5 6 5v6H20z" fill="#c86a3a" />
    <path d="M15 19h2v5h-2zM46 18h2v6h-2zM35 12h1.500v4H35zM39 12h1.500v4H39z" fill="#4a3020" />
    <path d="M46 5h1.500v16H46zM6 18h1.500v8H6z" fill="#6b4525" />
    <circle cx="46.500" cy="5" r="4.500" fill="#1f9a62" />
    <circle cx="50" cy="8" r="3" fill="#25ad6e" />
    <circle cx="43" cy="8" r="2.500" fill="#178a58" />
    <circle cx="7" cy="15" r="4.500" fill="#1f9a62" />
    <circle cx="11" cy="19" r="3.500" fill="#2cb878" />
    <circle cx="34" cy="22" r="2.500" fill="#1f9a62" />
    <path d="M2 31Q30 39 58 30" fill="none" stroke="#54c3e6" strokeWidth="1.500" />
    {[[14, 4], [22, 3], [28, 8], [53, 14], [20, 9], [56, 9]].map(([x, y]) => <circle key={x} cx={x} cy={y} r=".9" fill="#bfe6ea" />)}
  </Svg>
);

const WindowsLogo = () => (
  <svg width="29" height="29" viewBox="0 0 29 29">
    <defs>
      <linearGradient id="win" gradientUnits="userSpaceOnUse" x1="0" y1="0" x2="29" y2="29"><stop stopColor="#8be4ff" /><stop offset=".5" stopColor="#36bcff" /><stop offset="1" stopColor="#0090ff" /></linearGradient>
    </defs>
    <path d="M1 0h13v14H0V1zM15 0h13l1 1v13H15zM0 15h14v14H1l-1-1zM15 15h14v13l-1 1H15z" fill="url(#win)" />
  </svg>
);

const TaskView = () => (
  <Svg w={29} h={28} stroke="none">
    <rect x="7" y="0" width="22" height="20" rx="1" fill="#f2f2f2" />
    <rect x="0" y="8" width="22" height="20" rx="1" fill="#5a5a5a" />
    <rect x="7" y="8" width="15" height="12" fill="#a9a9a9" />
  </Svg>
);

const Copilot = () => (
  <svg width="29" height="28" viewBox="0 0 29 28">
    <defs>
      <linearGradient id="cpa" x1="0" y1="0" x2="0" y2="1"><stop stopColor="#1a7fe0" /><stop offset=".5" stopColor="#2bc4a0" /><stop offset="1" stopColor="#e8d840" /></linearGradient>
      <linearGradient id="cpb" x1=".8" y1="0" x2="0" y2="1"><stop stopColor="#a855f0" /><stop offset=".5" stopColor="#f0609a" /><stop offset="1" stopColor="#ffb060" /></linearGradient>
    </defs>
    <path d="M6 5Q8 0 12 0h6q3 0 4 4l1 3h-4q-3 0-4 4l-3 8q-1 3-4 3H4q-5 0-3.500-6z" fill="url(#cpa)" />
    <path d="M15 0h3q3 0 4 4l1 3h-5q-3-1-3-7z" fill="#2147c0" />
    <path d="M23 7h2q4 1 3.500 6L26 23q-1.500 5-6 5h-7q-4 0-4-5h3q2 0 3-3l3-9q1-4 5-4z" fill="url(#cpb)" />
    <path d="M7 22h6q-3 4-1 6-4 0-5-6z" fill="#e84a40" />
  </svg>
);

const Folder = () => (
  <svg width="30" height="27" viewBox="0 0 30 27">
    <path d="M1.500 0h8L13 3h15v6H0V1.500z" fill="#e0a010" />
    <path d="M0 6h10l3-2h16l1 1v22H0z" fill="#ffd04a" />
    <path d="M5 27v-5q0-3 3-3h14q3 0 3 3v5z" fill="#1a80cc" />
    <path d="M9 22.500h12" stroke="#0c58a0" strokeWidth="1.500" />
  </svg>
);

const Edge = () => (
  <svg width="31" height="30" viewBox="0 0 31 30">
    <defs>
      <linearGradient id="ea" x1="0" x2="1"><stop stopColor="#2aa8e0" /><stop offset=".5" stopColor="#2fc9c0" /><stop offset="1" stopColor="#62dc50" /></linearGradient>
      <linearGradient id="eb" x1="0" y1="0" x2="0" y2="1"><stop stopColor="#1c98e0" /><stop offset="1" stopColor="#0c5cb0" /></linearGradient>
    </defs>
    <path d="M1 12Q3 0 16 0Q30 1 31 13Q30 20 23 20Q18 20 18 17Q21 12 17 9Q9 5 1 12z" fill="url(#ea)" />
    <path d="M0 15Q1 6 9 6Q17 7 18 12Q12 12 12 18Q13 25 21 25Q26 25 28.500 23Q24 30 15.500 30Q1 29 0 15z" fill="url(#eb)" />
    <path d="M18 12Q12 12 12 18Q13 26 22 25Q26 25 28.500 22.500Q26 28 20 29.500Q9 28 9 19Q9 11 15 10z" fill="#11489a" />
  </svg>
);

const Gem = () => (
  <svg width="26" height="28" viewBox="0 0 26 28">
    <path d="M13 0l13 6v15l-13 7L0 21V6z" fill="#5b6068" />
    <path d="M13 0l13 6-5 13z" fill="#a4a9b0" />
    <path d="M0 6l13-6L6 18z" fill="#747a83" />
    <path d="M13 4l8 15-8 3-8-5z" fill="#24272c" />
    <path d="M13 4v13l-8 0z" fill="#3c4048" />
    <path d="M0 21l5-4 8 5v6z" fill="#8a8f97" />
    <path d="M26 21l-5-2-8 3v6z" fill="#3e434a" />
  </svg>
);

const Store = () => (
  <svg width="29" height="30" viewBox="0 0 29 30">
    <path d="M8 6V1.500h13V6" fill="none" stroke="#38b8f0" strokeWidth="2" />
    <path d="M0 4.500h29V26q0 4-4 4H4q-4 0-4-4z" fill="#ececec" />
    <path d="M9 11h5v5H9z" fill="#f25022" /><path d="M15 11h5v5h-5z" fill="#7fba00" />
    <path d="M9 17h5v5H9z" fill="#00a4ef" /><path d="M15 17h5v5h-5z" fill="#ffb900" />
  </svg>
);

const MyAsus = () => (
  <svg width="30" height="30" viewBox="0 0 30 30">
    <defs><linearGradient id="ma" x1="1" y1="0" x2="0" y2="1"><stop stopColor="#00a8ff" /><stop offset=".5" stopColor="#2f6cff" /><stop offset="1" stopColor="#5a12f0" /></linearGradient></defs>
    <path d="M0 0h30v30H0z" fill="url(#ma)" />
    <path d="M3 22L9.500 8h3L6 22zM9.500 22L16 8h3l-6.500 14zM15.500 22L22 8H24v9h-2v-3.500l-4 8.500z" fill="#dfe4ff" />
    <circle cx="22.500" cy="20.500" r="1.600" fill="#fff" />
  </svg>
);

const WhatsApp = () => (
  <svg width="30" height="30" viewBox="0 0 30 30" fill="none">
    <path d="M1.700 28.300L3.500 21.500Q1.500 18 1.500 14.500C2 6 8 1.500 15.500 1.500S28.500 7 28.500 14.500 23 27.500 15.500 27.500Q12 27.500 9 26z" stroke="#25d366" strokeWidth="2.800" />
    <path d="M9 8.500q2-2 3 0l1 2.500q0 1-1.500 2.500 2 4 6 5.500l1.800-2q.8-.7 4 1.500.5.500 0 1.500-2 4-7 2Q9 19 8 12.500 8 10 9 8.500z" fill="#25d366" />
  </svg>
);

const LinkedInTile = styled.span`
  width: 26px;
  height: 26px;
  border-radius: 2px;
  background: #0a66c2;
  color: #fff;
  font: 700 23px/24px "Open Sans", sans-serif;
  letter-spacing: -0.5px;
  text-align: center;
`;

const Chrome = () => (
  <svg width="30" height="30" viewBox="0 0 30 30">
    <path d="M15 15L2 7.500A15 15 0 0 1 28 7.500z" fill="#ea4335" />
    <path d="M15 15L15 30A15 15 0 0 1 2 7.500z" fill="#24a148" />
    <path d="M15 15L28 7.500A15 15 0 0 1 15 30z" fill="#fbc116" />
    <path d="M15 8h13.300L21 19l-6 11z" fill="#fbc116" />
    <path d="M2 7.500L8.500 18.500 15 22z" fill="#24a148" />
    <path d="M2.500 7h25.500v1.500H15z" fill="#ea4335" />
    <circle cx="15" cy="15" r="7.500" fill="#fff" /><circle cx="15" cy="15" r="5.800" fill="#3b7ded" />
  </svg>
);

const PhotoIcon = () => (
  <svg width="30" height="28" viewBox="0 0 30 28">
    <defs>
      <radialGradient id="ph" cx=".62" cy=".4" r=".5"><stop stopColor="#ffe0a0" /><stop offset=".35" stopColor="#e8903c" /><stop offset=".7" stopColor="#5a2410" /><stop offset="1" stopColor="#08060a" /></radialGradient>
    </defs>
    <path d="M.7.7h28.600v26.600H.7z" fill="url(#ph)" stroke="#fff" strokeWidth="1.400" />
    <path d="M2 5q11 6 15 21h-4Q10 14 2 9z" fill="#2b8ae0" />
    <path d="M1.500 8q9 6 11 18.500h-11z" fill="#05070f" />
    <circle cx="22" cy="15" r="1.500" fill="#200" />
  </svg>
);

const Slack = () => (
  <svg width="30" height="30" viewBox="0 0 30 30">
    <path d="M11 0a3 3 0 0 1 3 3v3h-3a3 3 0 0 1 0-6zM3 8h8a3 3 0 0 1 0 6H3a3 3 0 0 1 0-6z" fill="#36c5f0" />
    <path d="M16 3a3 3 0 0 1 6 0v8a3 3 0 0 1-6 0zM24 8h3a3 3 0 1 1-3 6z" fill="#2eb67d" />
    <path d="M19 16h8a3 3 0 0 1 0 6h-8a3 3 0 0 1 0-6zM16 24h3a3 3 0 1 1-3 3z" fill="#ecb22e" />
    <path d="M3 16h3v3a3 3 0 1 1-3-3zM8 19a3 3 0 0 1 6 0v8a3 3 0 0 1-6 0z" fill="#e01e5a" />
    <circle cx="25" cy="5" r="5" fill="#f00" />
  </svg>
);

const Taskbar = () => (
  <TaskBar>
    <Widget>
      <Anchor>
        <svg width="13" height="27" viewBox="0 0 13 27">
          <rect x=".5" y=".5" width="12" height="26" rx="2.500" fill="#17408b" stroke="#b8c0d0" />
          <path d="M7 1h4q1 0 1 2v21q0 2-2 2H8l1-8z" fill="#c9202f" />
          <path d="M5 1l4 3 1 8-2 6 1 8-4-7-2 6 2-10-2-6z" fill="#fff" />
        </svg>
        <Badge $bg="#ff8f96" $color="#301010" $x={5} $y={-7}>2</Badge>
      </Anchor>
      <Gap $w={18} />
      <TwoLines>
        <Text $track={0.55}>CHA - IND</Text>
        <Text $color="#b8b8b8" $track={0}>Game score</Text>
      </TwoLines>
    </Widget>
    <Slot $w={55}><WindowsLogo /></Slot>
    <TaskSearch>
      <Svg w={19} h={19} stroke="#e0e0e0" sw={2}><circle cx="8" cy="8" r="7" /><path d="M13 13l5 5" /></Svg>
      <Gap $w={12} />
      <Text $size={16.2} $w={164} $color="#dcdad8">Search</Text>
      <Book />
    </TaskSearch>
    <TaskButton><TaskView /></TaskButton>
    <TaskButton><Copilot /></TaskButton>
    <TaskButton><Folder /></TaskButton>
    <TaskButton><Edge /></TaskButton>
    <TaskButton><Gem /></TaskButton>
    <TaskButton><Store /></TaskButton>
    <TaskButton><MyAsus /></TaskButton>
    <TaskButton><Anchor><WhatsApp /><Badge $bg="#dba1e0" $color="#181018" $x={16} $y={-7}>9</Badge></Anchor><Running /></TaskButton>
    <TaskButton><LinkedInTile>in</LinkedInTile></TaskButton>
    <TaskButton><Anchor><Chrome /><Badge $bg="#00493f" $color="#a8d8c8" $x={16} $y={-7}>S</Badge></Anchor><Running /></TaskButton>
    <TaskButton $active><ExcelLogo size={29} /><Running $active /></TaskButton>
    <TaskButton><PhotoIcon /><Running /></TaskButton>
    <TaskButton><Slack /><Running /></TaskButton>
    <Gap $w={140} />
    <Chevron w={13} up color="#fff" sw={2} />
    <Gap $w={27} />
    <Text $w={52} $track={-0.4}>ENG</Text>
    <Svg w={20} h={16} stroke="#fff" sw={1.6}>
      <path d="M1 6q9-9 18 0M3.800 9q6.200-6 12.400 0M6.500 12q3.500-3.500 7 0" /><circle cx="10" cy="14" r="1.800" fill="#fff" stroke="none" />
    </Svg>
    <Gap $w={9} />
    <Svg w={21} h={16} stroke="#fff" sw={1.4}>
      <path d="M1 5.500h3.500L9 1.500v13L4.500 10.500H1zM12 5q2.500 3 0 6M14.500 3q4.500 5 0 10M17 1q6 7 0 14" />
    </Svg>
    <Gap $w={10} />
    <Svg w={20} h={17} stroke="#fff" sw={1.5}>
      <path d="M7 3.500h8q2 0 2 2v7q0 2-2 2H3.500q-2 0-2-2V10M18.500 7v4" />
      <path d="M5 7h4l5.500-1v6.500H4z" fill="#fff" stroke="none" />
      <path d="M5 -1L0 5.500h2.500L1.500 11 7 3.500H4.500z" fill="#fff" stroke="none" />
    </Svg>
    <Gap $w={20} />
    <TwoLines $right>
      <Text $track={-0.3}>18:13</Text>
      <Text $track={0.18}>03-04-2025</Text>
    </TwoLines>
  </TaskBar>
);

export default function App() {
  return (
    <Window>
      <GlobalStyle />
      <Title />
      <Tabs />
      <Ribbon />
      <Formula />
      <Worksheet />
      <SheetTabs />
      <Status />
      <Taskbar />
    </Window>
  );
}
